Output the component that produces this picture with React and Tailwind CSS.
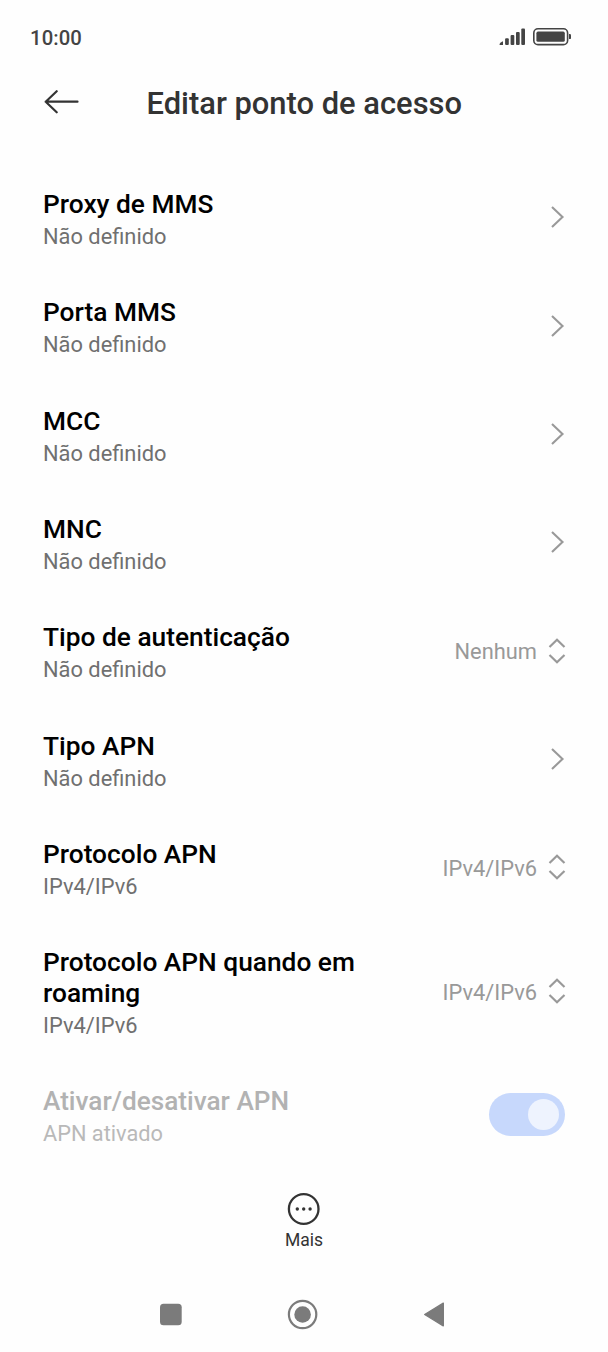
const rows = [
  { title: 'Proxy de MMS', sub: 'Não definido' },
  { title: 'Porta MMS', sub: 'Não definido' },
  { title: 'MCC', sub: 'Não definido' },
  { title: 'MNC', sub: 'Não definido' },
  { title: 'Tipo de autenticação', sub: 'Não definido', value: 'Nenhum' },
  { title: 'Tipo APN', sub: 'Não definido' },
  { title: 'Protocolo APN', sub: 'IPv4/IPv6', value: 'IPv4/IPv6' },
  { title: 'Protocolo APN quando em roaming', sub: 'IPv4/IPv6', value: 'IPv4/IPv6', tall: true },
];

function StatusBar() {
  return (
    <div className="flex h-[74px] items-center justify-between pr-[36px] pl-[30px] text-[#444444]">
      <span className="pt-[2px] text-[20.3px] leading-6 font-medium tracking-[0.1px]">10:00</span>
      <div className="flex items-center gap-[7px]">
        <svg width="27" height="18" viewBox="0 0 27 18" fill="currentColor">
          <path d="M0.5 16.6 Q0.5 14.6 4 13.2 V17 H0.9 Q0.5 17 0.5 16.6Z" />
          <rect x="6.1" y="10.2" width="3.7" height="6.8" rx="1" />
          <rect x="11.6" y="7" width="3.7" height="10" rx="1" />
          <rect x="17" y="4" width="3.7" height="13" rx="1" />
          <rect x="22.3" y="0.5" width="3.7" height="16.5" rx="1" />
        </svg>
        <svg width="39" height="18" viewBox="0 0 39 18" fill="currentColor">
          <rect x="0.8" y="0.8" width="33.8" height="15.8" rx="4.2" fill="none" stroke="currentColor" strokeWidth="1.6" />
          <rect x="3.4" y="3.6" width="28.4" height="10.2" rx="1.6" />
          <path d="M36 6.1 h0.8 q1.2 0 1.2 1.2 v2.6 q0 1.2 -1.2 1.2 h-0.8z" />
        </svg>
      </div>
    </div>
  );
}

function Header() {
  return (
    <header className="flex h-[89px] items-start pt-[9px] pl-[44px]">
      <svg className="mt-[7px]" width="36" height="24" viewBox="0 0 36 24" fill="none" stroke="#333333" strokeWidth="2.2" strokeLinecap="round" strokeLinejoin="round">
        <path d="M33.5 11.7H1.7M12.7 1.2L1.7 11.7L12.7 22.3" />
      </svg>
      <h1 className="mt-px ml-[66.5px] text-[30.9px] leading-[40px] font-medium whitespace-nowrap text-[#333333]">Editar ponto de acesso</h1>
    </header>
  );
}

function Chevron() {
  return (
    <svg className="mr-[43px] shrink-0" width="15" height="24" viewBox="0 0 15 24" fill="none" stroke="#999999" strokeWidth="2.1">
      <path d="M2 2L12.5 12L2 22" />
    </svg>
  );
}

function UpDown() {
  return (
    <svg className="mr-[42px] ml-[11px] shrink-0" width="18" height="26" viewBox="0 0 18 26" fill="none" stroke="#999999" strokeWidth="2.2">
      <path d="M1.5 9L9 1.8L16.5 9M1.5 17L9 24.2L16.5 17" />
    </svg>
  );
}

function Row({ title, sub, value, tall }) {
  return (
    <li className={`flex items-center pl-[43px] ${tall ? 'h-[139.2px]' : 'h-[108.35px]'}`}>
      <div className="w-[330px] pt-[4.4px]">
        <div className="text-[26.3px] leading-[31px] font-medium text-black">{title}</div>
        <div className="mt-[4px] text-[21.85px] leading-[26px] text-[#707070]">{sub}</div>
      </div>
      <div className="ml-auto flex items-center">
        {value && <span className="pt-[3px] text-[21.85px] leading-[26px] text-[#999999]">{value}</span>}
        {value ? <UpDown /> : <Chevron />}
      </div>
    </li>
  );
}

function ToggleRow() {
  return (
    <li className="flex h-[108.4px] items-center justify-between pr-[43px] pl-[43px]">
      <div className="pt-[3.4px]">
        <div className="text-[26.2px] leading-[31px] font-medium text-[#b2b2b2]">Ativar/desativar APN</div>
        <div className="mt-[4px] text-[21.75px] leading-[26px] text-[#b9b9b9]">APN ativado</div>
      </div>
      <button className="flex h-[43px] w-[76px] items-center justify-end rounded-full bg-[#c7d8fc] pr-[6px]">
        <span className="h-[31px] w-[31px] rounded-full bg-[#eef3fe]" />
      </button>
    </li>
  );
}

function NavBar() {
  return (
    <nav className="flex h-[76px] items-center justify-between pr-[163px] pl-[159px] text-[#7b7b7b]">
      <svg width="24" height="32" viewBox="0 0 24 32" fill="currentColor">
        <rect x="1" y="5.8" width="21.7" height="21.5" rx="3.5" />
      </svg>
      <svg width="32" height="32" viewBox="0 0 32 32" fill="currentColor">
        <circle cx="15.6" cy="16.5" r="13.7" fill="none" stroke="currentColor" strokeWidth="2.2" />
        <circle cx="15.6" cy="16.5" r="8.3" />
      </svg>
      <svg width="22" height="32" viewBox="0 0 22 32" fill="currentColor">
        <path d="M1.7 16.5L20.3 5.2V27.8Z" stroke="currentColor" strokeWidth="1.4" strokeLinejoin="round" />
      </svg>
    </nav>
  );
}

export default function App() {
  return (
    <div className="flex h-[1352px] w-[608px] flex-col overflow-hidden bg-[#fefefe] font-['Roboto',sans-serif]">
      <StatusBar />
      <Header />
      <ul>
        {rows.map((row) => <Row key={row.title} {...row} />)}
        <ToggleRow />
      </ul>
      <div className="mt-auto flex h-[84px] flex-col items-center text-[#333333]">
        <svg width="34" height="34" viewBox="0 0 34 34" fill="currentColor">
          <circle cx="16.7" cy="17" r="14.8" fill="none" stroke="currentColor" strokeWidth="2.3" />
          <circle cx="10.3" cy="17" r="1.7" />
          <circle cx="16.7" cy="17" r="1.7" />
          <circle cx="23.1" cy="17" r="1.7" />
        </svg>
        <span className="mt-[4px] text-[17.5px] leading-[21px]">Mais</span>
      </div>
      <NavBar />
    </div>
  );
}
